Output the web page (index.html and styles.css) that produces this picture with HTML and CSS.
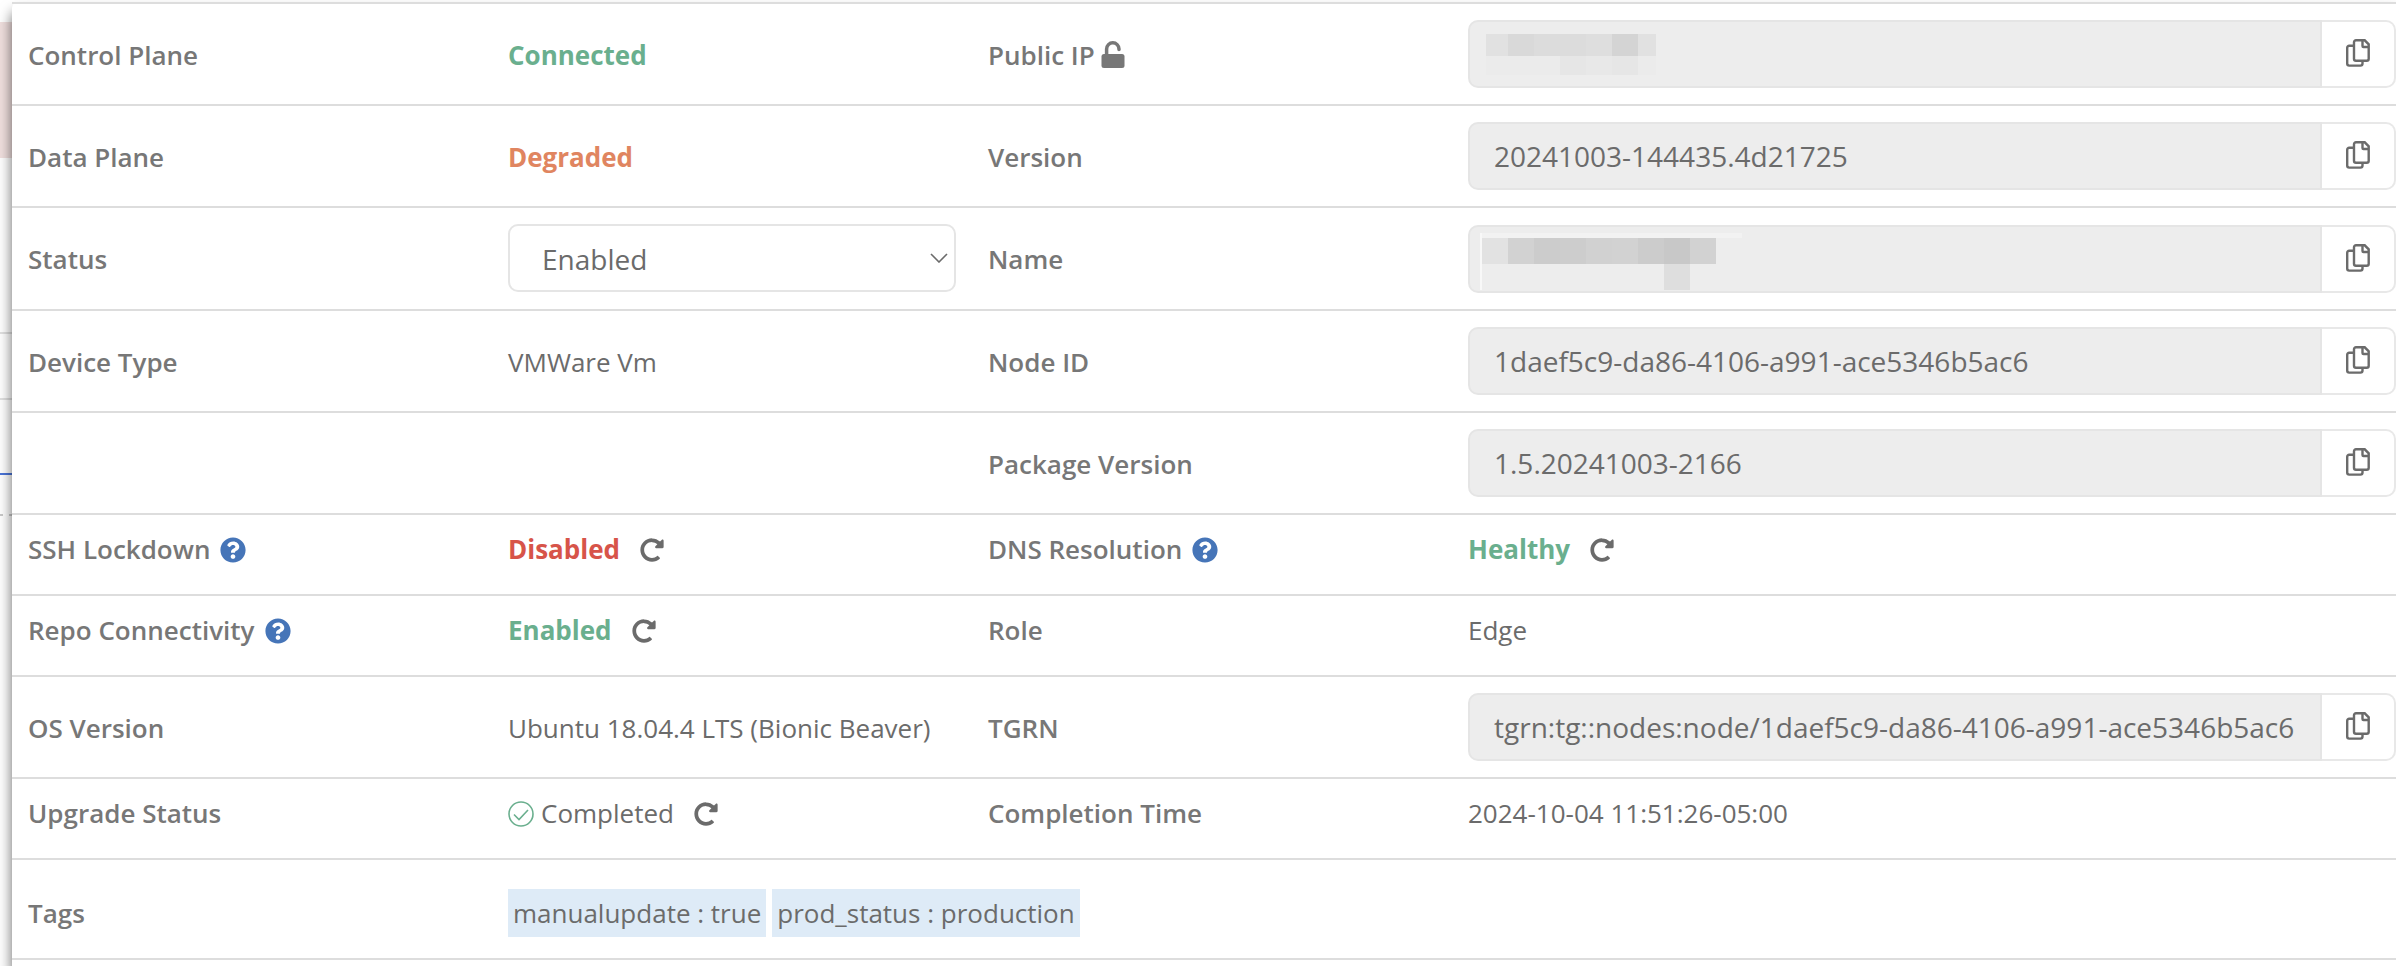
FILE: index.html
```html
<!DOCTYPE html>
<html lang="en">
<head>
<meta charset="utf-8">
<meta name="viewport" content="width=device-width, initial-scale=1">
<title>Node details</title>
<link rel="stylesheet" href="styles.css">
</head>
<body>
<svg class="sprite" aria-hidden="true">
  <symbol id="copy" viewBox="0 0 24 28">
    <path d="M7 6.7H3.2a2 2 0 0 0-2 2v15.9a2 2 0 0 0 2 2h11.300a2 2 0 0 0 2-2V22M10 1.300h8.700l4 4v14.500a2 2 0 0 1-2 2H10a2 2 0 0 1-2-2V3.300a2 2 0 0 1 2-2zM16.500 1.500v5.500a1 1 0 0 0 1 1h5" fill="none" stroke="currentColor" stroke-width="2.400"/>
  </symbol>
  <symbol id="redo" viewBox="0 0 512 512">
    <path fill="currentColor" d="M256.455 8c66.269.119 126.437 26.233 170.859 68.685l35.715-35.715C478.149 25.851 504 36.559 504 57.941V192c0 13.255-10.745 24-24 24H345.941c-21.382 0-32.090-25.851-16.971-40.971l41.750-41.750c-30.864-28.899-70.801-44.907-113.230-45.273-92.398-.798-170.283 73.977-169.484 169.442C88.764 348.009 162.184 424 256 424c41.127 0 79.997-14.678 110.629-41.556 4.743-4.161 11.906-3.908 16.368.553l39.662 39.662c4.872 4.872 4.631 12.815-.482 17.433C378.202 479.813 319.926 504 256 504 119.034 504 8.001 392.967 8 256.002 7.999 119.193 119.646 7.755 256.455 8z"/>
  </symbol>
  <symbol id="help" viewBox="0 0 512 512">
    <path fill="currentColor" d="M504 256c0 136.997-111.043 248-248 248S8 392.997 8 256C8 119.083 119.043 8 256 8s248 111.083 248 248zM262.655 90c-54.497 0-89.255 22.957-116.549 63.758-3.536 5.286-2.353 12.415 2.715 16.258l34.699 26.310c5.205 3.947 12.621 3.008 16.665-2.122 17.864-22.658 30.113-35.797 57.303-35.797 20.429 0 45.698 13.148 45.698 32.958 0 14.976-12.363 22.667-32.534 33.976C247.128 238.528 216 254.941 216 296v4c0 6.627 5.373 12 12 12h56c6.627 0 12-5.373 12-12v-1.333c0-28.462 83.186-29.647 83.186-106.667 0-58.002-60.165-102-116.531-102zM256 338c-25.365 0-46 20.635-46 46 0 25.364 20.635 46 46 46s46-20.636 46-46c0-25.365-20.635-46-46-46z"/>
  </symbol>
</svg>

<div class="page">
  <div class="backdrop" aria-hidden="true">
    <div class="alert-edge"></div>
    <div class="rule rule-first"></div>
    <div class="rule rule-second"></div>
    <div class="rule rule-blue"></div>
    <div class="dashes"></div>
  </div>

  <main class="panel">
    <dl class="details">
      <div class="row">
        <dt>Control Plane</dt>
        <dd class="ok">Connected</dd>
        <dt><label for="ip">Public IP</label><svg class="lock" viewBox="0 0 24 28" aria-hidden="true"><path d="M5.600 15V8a6.200 6.200 0 0 1 12.400 0v.5" fill="none" stroke="currentColor" stroke-width="3.500" stroke-linecap="round"/><rect x=".5" y="13" width="23" height="14" rx="2.500" fill="currentColor"/></svg></dt>
        <dd class="wide field"><div class="group">
          <input id="ip" type="text" readonly>
          <svg class="mask mask-ip" viewBox="0 0 170 41" aria-hidden="true" shape-rendering="crispEdges">
            <path fill="#e1e1e1" d="M0 0h22v22H0zM152 0h18v22h-18z"/><path fill="#d9d9d9" d="M22 0h26v22H22z"/><path fill="#dcdcdc" d="M48 0h52v22H48z"/><path fill="#dedede" d="M100 0h26v22h-26z"/><path fill="#d4d4d4" d="M126 0h26v22h-26z"/>
            <path fill="#ebebeb" d="M0 22h74v19H0zM152 22h18v19h-18z"/><path fill="#e6e6e6" d="M74 22h26v19H74zM126 22h26v19h-26z"/><path fill="#e8e8e8" d="M100 22h26v19h-26z"/>
          </svg>
          <button type="button" aria-label="Copy public IP"><svg class="copy"><use href="#copy"/></svg></button>
        </div></dd>
      </div>
      <div class="row">
        <dt>Data Plane</dt>
        <dd class="warn">Degraded</dd>
        <dt><label for="version">Version</label></dt>
        <dd class="wide field"><div class="group">
          <input id="version" type="text" readonly value="20241003-144435.4d21725">
          <button type="button" aria-label="Copy version"><svg class="copy"><use href="#copy"/></svg></button>
        </div></dd>
      </div>
      <div class="row">
        <dt><label for="status">Status</label></dt>
        <dd class="field"><div class="select">
          <select id="status"><option>Enabled</option><option>Disabled</option></select>
          <svg class="chevron" viewBox="0 0 18 10" aria-hidden="true"><path d="M1 1l8 8 8-8" fill="none" stroke="currentColor" stroke-width="1.600"/></svg>
        </div></dd>
        <dt><label for="name">Name</label></dt>
        <dd class="wide field"><div class="group">
          <input id="name" type="text" readonly>
          <svg class="mask mask-name" viewBox="0 0 262 57" aria-hidden="true" shape-rendering="crispEdges">
            <path fill="#f2f2f2" d="M0 0h262v5H0z"/><path fill="#f8f8f8" d="M0 0h2v57H0z"/>
            <path fill="#e2e2e2" d="M2 5h26v26H2z"/><path fill="#d2d2d2" d="M28 5h26v26H28zM132 5h26v26h-26zM210 5h26v26h-26z"/><path fill="#ccc" d="M54 5h26v26H54zM158 5h26v26h-26z"/><path fill="#cdcdcd" d="M80 5h26v26H80z"/><path fill="#d1d1d1" d="M106 5h26v26h-26z"/><path fill="#c8c8c8" d="M184 5h26v26h-26z"/><path fill="#dedede" d="M184 31h26v26h-26z"/>
          </svg>
          <button type="button" aria-label="Copy name"><svg class="copy"><use href="#copy"/></svg></button>
        </div></dd>
      </div>
      <div class="row">
        <dt>Device Type</dt>
        <dd>VMWare Vm</dd>
        <dt><label for="node">Node ID</label></dt>
        <dd class="wide field"><div class="group">
          <input id="node" type="text" readonly value="1daef5c9-da86-4106-a991-ace5346b5ac6">
          <button type="button" aria-label="Copy node ID"><svg class="copy"><use href="#copy"/></svg></button>
        </div></dd>
      </div>
      <div class="row">
        <dt class="third"><label for="package">Package Version</label></dt>
        <dd class="wide field"><div class="group">
          <input id="package" type="text" readonly value="1.5.20241003-2166">
          <button type="button" aria-label="Copy package version"><svg class="copy"><use href="#copy"/></svg></button>
        </div></dd>
      </div>
      <div class="row compact">
        <dt>SSH Lockdown<button class="help" type="button" aria-label="About SSH lockdown"><svg><use href="#help"/></svg></button></dt>
        <dd><span class="bad">Disabled</span><button class="redo" type="button" aria-label="Refresh SSH lockdown"><svg><use href="#redo"/></svg></button></dd>
        <dt>DNS Resolution<button class="help" type="button" aria-label="About DNS resolution"><svg><use href="#help"/></svg></button></dt>
        <dd class="wide"><span class="ok">Healthy</span><button class="redo" type="button" aria-label="Refresh DNS resolution"><svg><use href="#redo"/></svg></button></dd>
      </div>
      <div class="row compact">
        <dt>Repo Connectivity<button class="help" type="button" aria-label="About repo connectivity"><svg><use href="#help"/></svg></button></dt>
        <dd><span class="ok">Enabled</span><button class="redo" type="button" aria-label="Refresh repo connectivity"><svg><use href="#redo"/></svg></button></dd>
        <dt>Role</dt>
        <dd class="wide">Edge</dd>
      </div>
      <div class="row">
        <dt>OS Version</dt>
        <dd>Ubuntu 18.04.4 LTS (Bionic Beaver)</dd>
        <dt><label for="tgrn">TGRN</label></dt>
        <dd class="wide field"><div class="group">
          <input id="tgrn" type="text" readonly value="tgrn:tg::nodes:node/1daef5c9-da86-4106-a991-ace5346b5ac6">
          <button type="button" aria-label="Copy TGRN"><svg class="copy"><use href="#copy"/></svg></button>
        </div></dd>
      </div>
      <div class="row compact">
        <dt>Upgrade Status</dt>
        <dd><svg class="check" viewBox="0 0 26 26" aria-hidden="true"><g fill="none" stroke="currentColor" stroke-width="1.600"><circle cx="13" cy="13" r="12"/><path d="M6 13.500l5 5L20 9"/></g></svg>Completed<button class="redo" type="button" aria-label="Refresh upgrade status"><svg><use href="#redo"/></svg></button></dd>
        <dt>Completion Time</dt>
        <dd class="wide">2024-10-04 11:51:26-05:00</dd>
      </div>
      <div class="row tags">
        <dt class="field">Tags</dt>
        <dd class="tag-list field"><span class="tag">manualupdate : true</span><span class="tag">prod_status : production</span></dd>
      </div>
    </dl>
  </main>
</div>
</body>
</html>
```
FILE: styles.css
```css
* {
  box-sizing: border-box;
}

body {
  margin: 0;
  background: #fff;
  color: #6b6b6b;
  font: 26px/39px "Open Sans", "Noto Sans", sans-serif;
}

.sprite {
  display: none;
}

.page {
  display: grid;
  grid-template-columns: 12px minmax(0, 1fr);
  min-height: 100vh;
  overflow: hidden;
}

/* Sliver of the page that stays visible behind the panel */
.alert-edge {
  height: 136px;
  margin-top: 22px;
  background: #f0dfde;
}

.rule {
  height: 2px;
  background: #e0e0e0;
}

.rule-first {
  margin-top: 174px;
}

.rule-second {
  margin-top: 64px;
}

.rule-blue {
  margin-top: 73px;
  background: #4a74d8;
}

.dashes {
  height: 2px;
  margin-top: 39px;
  background: linear-gradient(90deg, #c8c8c8 3px, transparent 3px 9px, #c8c8c8 9px);
}

.panel {
  position: relative;
  margin-top: 2px;
  border-top-left-radius: 6px;
  background: #fff;
  box-shadow: 0 10px 14px rgba(0, 0, 0, 0.6);
}

.details {
  margin: 0;
  border-bottom: 2px solid #ddd;
}

.row {
  display: grid;
  grid-template-columns: repeat(5, minmax(0, 1fr));
  column-gap: 32px;
  align-items: center;
  padding: 16px 0 16px 16px;
  border-top: 2px solid #ddd;
}

.compact {
  padding-top: 13px;
  padding-bottom: 25px;
}

.tags {
  padding-top: 29px;
  padding-bottom: 21px;
}

dt,
dd {
  display: flex;
  align-items: center;
  margin: 0;
  padding-top: 2px;
  white-space: nowrap;
}

dt {
  color: #777;
  font-weight: 600;
}

.field {
  padding-top: 0;
}

.third {
  grid-column: 3;
}

.wide {
  grid-column: span 2;
}

.ok,
.warn,
.bad {
  font-weight: 700;
}

.ok {
  color: #6aaf8e;
}

.warn {
  color: #e08560;
}

.bad {
  color: #d75449;
}

input,
select {
  width: 100%;
  min-width: 0;
  height: 68px;
  margin: 0;
  border: 2px solid #e5e5e5;
  color: #6b6b6b;
  font: inherit;
  font-size: 28px;
}

button {
  display: flex;
  align-items: center;
  justify-content: center;
  padding: 0;
  border: 0;
  background: none;
  color: #6b6b6b;
}

.group {
  position: relative;
  display: flex;
  width: 100%;
}

.group input {
  flex: 1;
  padding: 0 24px;
  border-radius: 10px 0 0 10px;
  background: #ededed;
}

.group button {
  width: 74px;
  border: 2px solid #e8e8e8;
  border-left: 0;
  border-radius: 0 10px 10px 0;
  background: #fff;
}

.copy {
  width: 24px;
  height: 28px;
  margin-bottom: 2px;
}

.mask {
  position: absolute;
}

.mask-ip {
  top: 14px;
  left: 18px;
  width: 170px;
  height: 41px;
}

.mask-name {
  top: 8px;
  left: 12px;
  width: 262px;
  height: 57px;
}

.select {
  position: relative;
  width: 100%;
  padding-bottom: 1px;
}

select {
  display: block;
  padding: 2px 32px 0;
  border-radius: 10px;
  background: #fff;
  appearance: none;
}

.chevron {
  position: absolute;
  top: 29px;
  right: 8px;
  width: 18px;
  height: 10px;
  pointer-events: none;
}

.lock {
  width: 24px;
  height: 28px;
  margin-left: 6px;
}

.help {
  margin-left: 10px;
  color: #4675b8;
}

.redo {
  margin-left: 20px;
}

.help svg {
  width: 26px;
  height: 26px;
}

.redo svg {
  width: 24px;
  height: 24px;
}

.check {
  width: 26px;
  height: 26px;
  margin-right: 7px;
  color: #6aaf8e;
}

.tag-list {
  grid-column: span 4;
  gap: 6px;
}

.tag {
  padding: 6px 5px;
  background: #deebf7;
  line-height: 36px;
}
```
